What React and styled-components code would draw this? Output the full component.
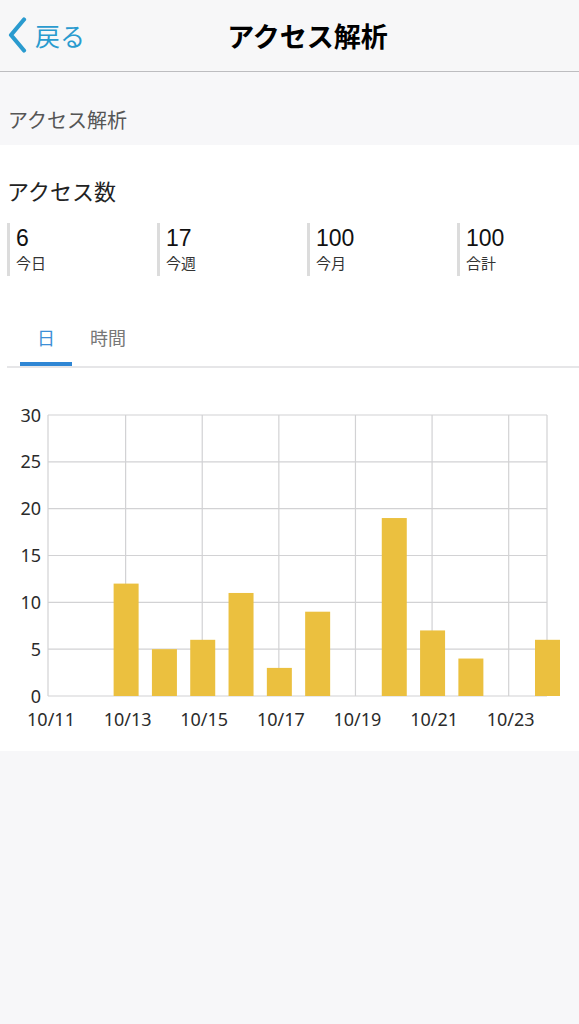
import styled, { createGlobalStyle } from 'styled-components';

const GlobalStyle = createGlobalStyle`
  body {
    margin: 0;
    background: #f7f7f9;
    font-family: "Noto Sans CJK JP", "Noto Sans", sans-serif;
  }
`;

const stats = [
  { value: 6, label: '今日' },
  { value: 17, label: '今週' },
  { value: 100, label: '今月' },
  { value: 100, label: '合計' },
];

const days = [0, 0, 12, 5, 6, 11, 3, 9, 0, 19, 7, 4, 0, 6];

export default function App() {
  return (
    <Page>
      <GlobalStyle />
      <NavBar>
        <BackButton>
          <svg width="22" height="36" viewBox="0 0 22 36">
            <path d="M18 2.5 L5 18 L18 33.5" fill="none" stroke="#2a9bcf" strokeWidth="4.2" strokeLinecap="round" strokeLinejoin="round" />
          </svg>
          <span>戻る</span>
        </BackButton>
        <NavTitle>アクセス解析</NavTitle>
      </NavBar>
      <SectionHeader>アクセス解析</SectionHeader>
      <Card>
        <CardTitle>アクセス数</CardTitle>
        <StatsRow>
          {stats.map((s) => (
            <Stat key={s.label}>
              <StatValue>{s.value}</StatValue>
              <StatLabel>{s.label}</StatLabel>
            </Stat>
          ))}
        </StatsRow>
        <Tabs>
          <Tab $active>日</Tab>
          <Tab>時間</Tab>
        </Tabs>
        <Chart />
      </Card>
    </Page>
  );
}

function Chart() {
  const left = 49;
  const right = 547;
  const top = 47;
  const bottom = 328;
  const step = (right - left) / 13;
  const yScale = (v) => bottom - (v / 30) * (bottom - top);
  const ticks = [0, 5, 10, 15, 20, 25, 30];

  return (
    <ChartSvg width="579" height="383" viewBox="0 0 579 383">
      {ticks.map((t) => (
        <g key={t}>
          <line x1={left - 1} x2={right} y1={yScale(t)} y2={yScale(t)} stroke="#d2d2d4" strokeWidth="1.2" />
          <text x="41" y={yScale(t) + 6.5} textAnchor="end" fontSize="18" fill="#2b2b2b">{t}</text>
        </g>
      ))}
      <line x1={left - 1} x2={left - 1} y1={top} y2={bottom} stroke="#d2d2d4" strokeWidth="1.2" />
      {days.map((_, i) =>
        i % 2 === 0 ? (
          <g key={i}>
            {i > 0 && (
              <line x1={left + i * step} x2={left + i * step} y1={top} y2={bottom} stroke="#d2d2d4" strokeWidth="1.2" />
            )}
            <text x={left + i * step + 2} y="358" textAnchor="middle" fontSize="18" fill="#2b2b2b">
              10/{11 + i}
            </text>
          </g>
        ) : null
      )}
      <line x1={right} x2={right} y1={top} y2={bottom} stroke="#d2d2d4" strokeWidth="1.2" />
      {days.map((v, i) =>
        v > 0 ? (
          <rect key={i} x={left + i * step - 12} y={yScale(v)} width="25" height={bottom - yScale(v)} fill="#ebc03f" />
        ) : null
      )}
    </ChartSvg>
  );
}

const Page = styled.div`
  min-height: 1024px;
  background: #f7f7f9;
`;

const NavBar = styled.header`
  height: 71px;
  border-bottom: 1px solid #bdbdc0;
  background: #f7f7f8;
  display: flex;
  align-items: center;
  justify-content: center;
  position: relative;
`;

const BackButton = styled.div`
  position: absolute;
  left: 6px;
  top: 17px;
  display: flex;
  align-items: center;
  gap: 7px;
  color: #2a9bcf;
  font-size: 25px;
  span {
    line-height: 36px;
  }
`;

const NavTitle = styled.h1`
  margin: 0 0 0 36px;
  font-size: 27px;
  font-weight: 700;
  color: #000;
`;

const SectionHeader = styled.div`
  height: 73px;
  box-sizing: border-box;
  padding: 0 8px 11px;
  display: flex;
  align-items: flex-end;
  font-size: 20px;
  color: #555;
`;

const Card = styled.section`
  background: #fff;
  padding: 31px 0 0 7px;
`;

const CardTitle = styled.h2`
  margin: 0 0 19px 0;
  font-size: 22px;
  line-height: 28px;
  font-weight: 400;
  color: #222;
`;

const StatsRow = styled.div`
  display: grid;
  grid-template-columns: repeat(4, 150px);
`;

const Stat = styled.div`
  border-left: 3px solid #dcdcdc;
  padding-left: 6px;
  height: 53px;
`;

const StatValue = styled.div`
  font-family: "Liberation Sans", "Noto Sans", sans-serif;
  font-size: 23px;
  line-height: 28px;
  padding-top: 1px;
  color: #111;
`;

const StatLabel = styled.div`
  font-size: 15px;
  line-height: 21px;
  color: #333;
`;

const Tabs = styled.div`
  margin-top: 40px;
  padding-left: 13px;
  display: flex;
  gap: 10px;
  border-bottom: 2px solid #e6e6e8;
`;

const Tab = styled.div`
  width: 52px;
  text-align: center;
  font-size: 18px;
  line-height: 24px;
  padding: 9px 0 13px;
  color: ${(p) => (p.$active ? '#3d8fd6' : '#777')};
  border-bottom: 4px solid ${(p) => (p.$active ? '#2f86d4' : 'transparent')};
`;

const ChartSvg = styled.svg`
  display: block;
  margin-left: -7px;
  font-family: "Noto Sans", "Liberation Sans", sans-serif;
`;
